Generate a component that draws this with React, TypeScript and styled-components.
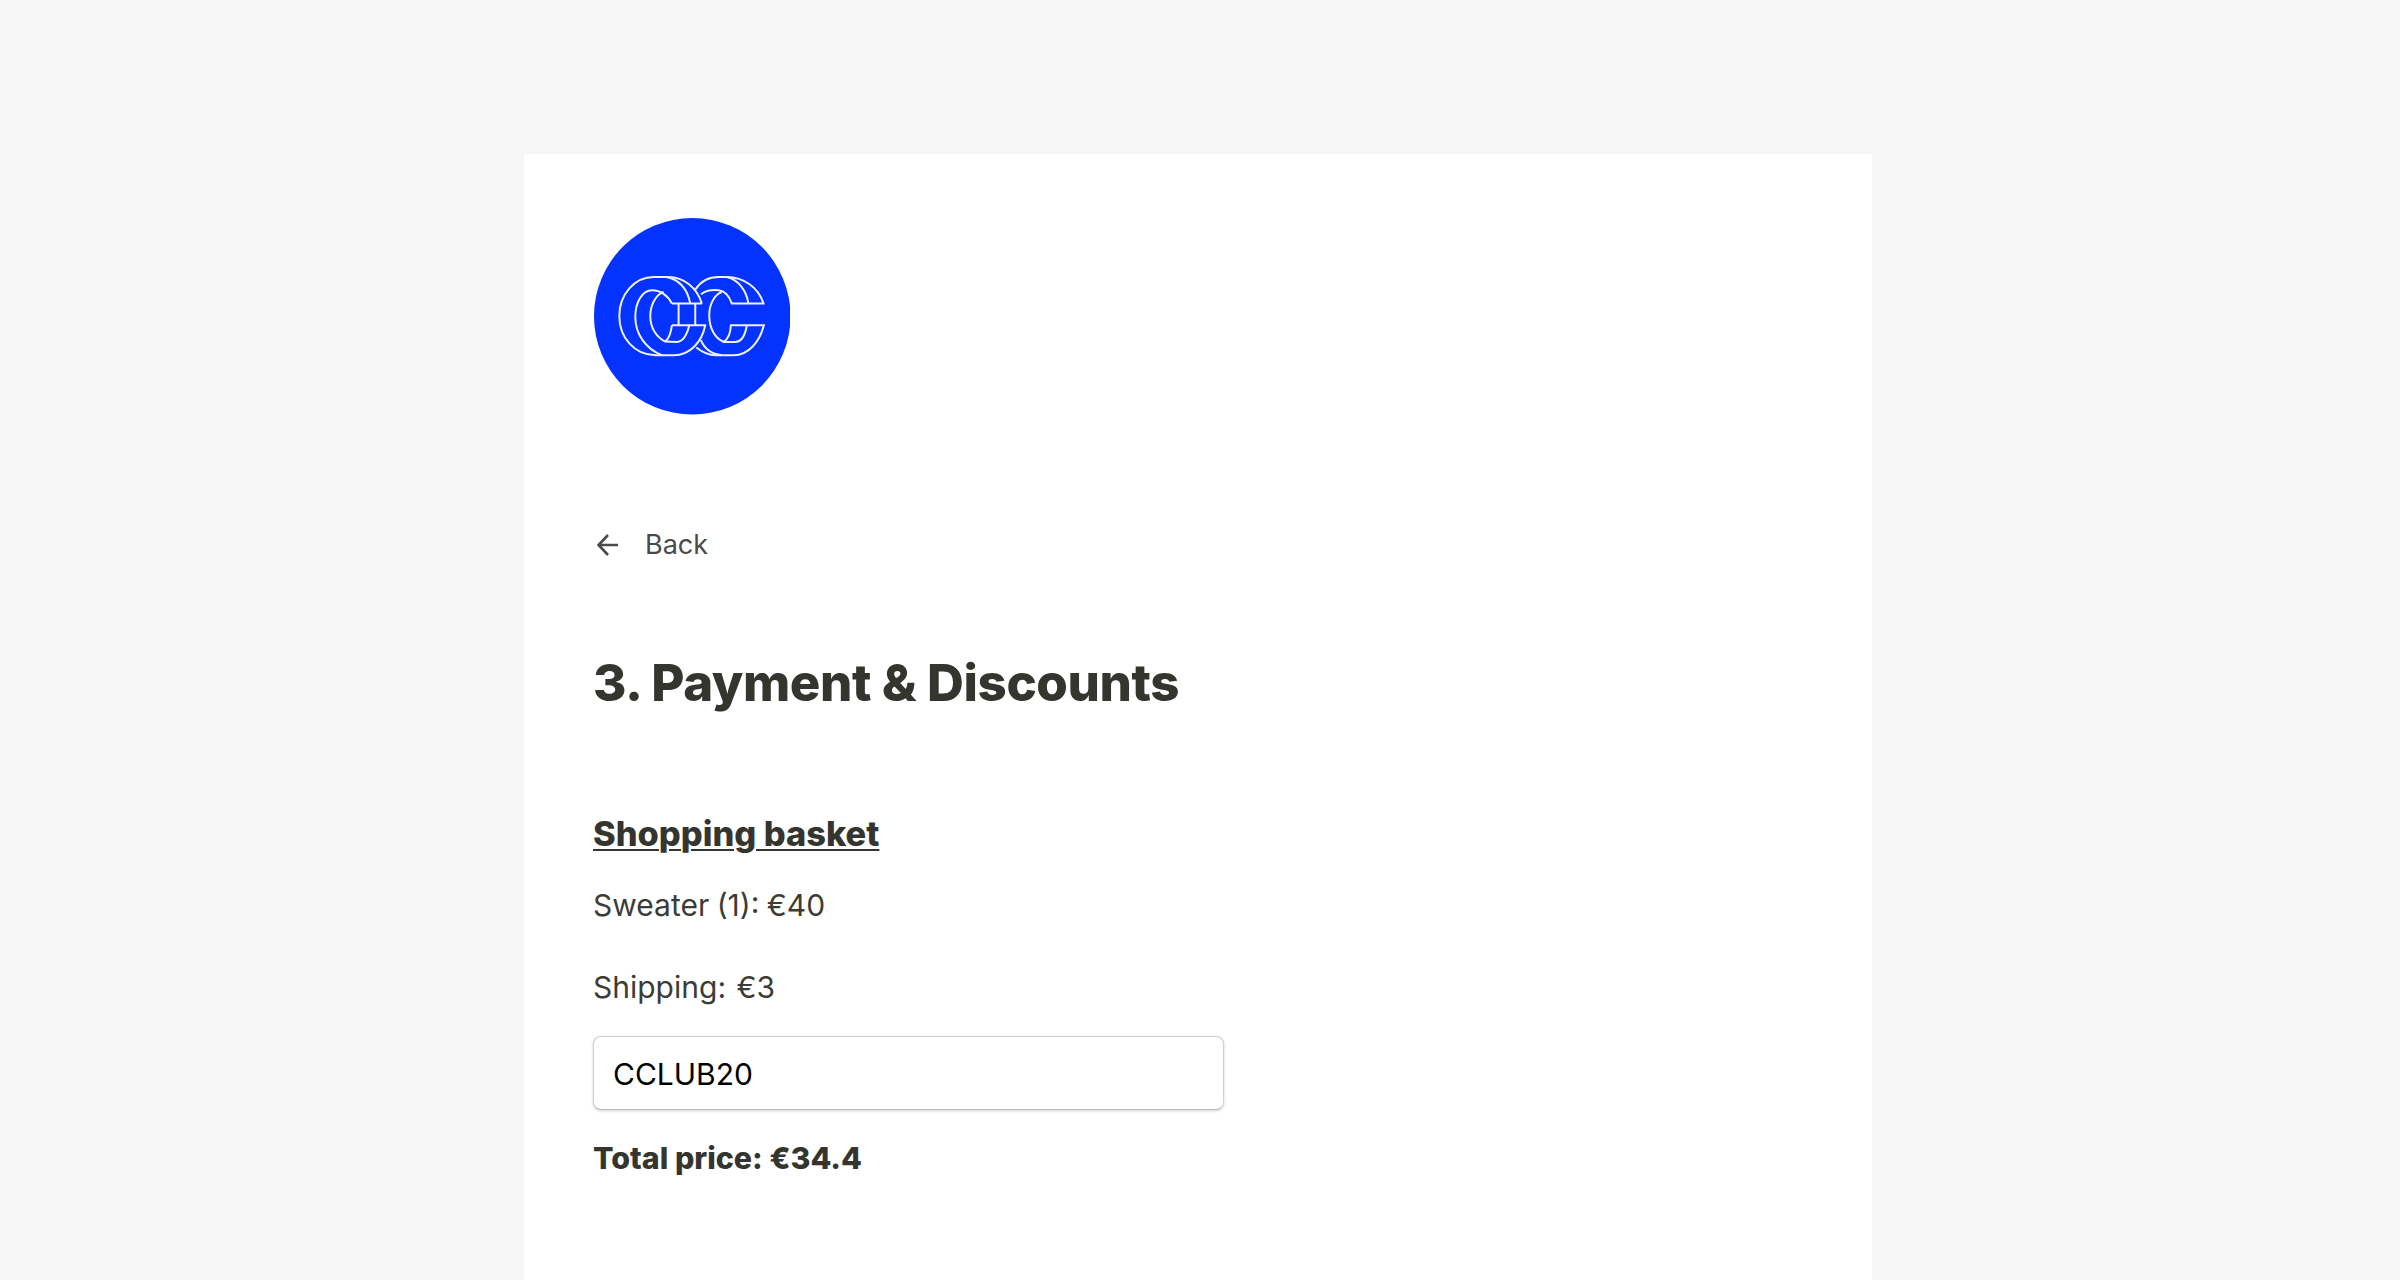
import React from "react";
import styled, { createGlobalStyle } from "styled-components";

const GlobalStyle = createGlobalStyle`
  html, body {
    margin: 0;
    padding: 0;
    background: #f6f6f6;
    font-family: Inter, "Liberation Sans", sans-serif;
    color: #35352f;
  }
`;

const Page = styled.div`
  width: 100%;
  height: 1280px;
  overflow: hidden;
  padding: 154px 0 0 524px;
  box-sizing: border-box;
`;

const Card = styled.main`
  width: 1348px;
  height: 1126px;
  background: #ffffff;
  padding: 64px 70px 0 69px;
  box-sizing: border-box;
`;

const LogoBadge = styled.svg`
  display: block;
  width: 196.5px;
  height: 196.5px;
  margin-left: 0.5px;
`;

const BackLink = styled.a`
  display: flex;
  align-items: center;
  gap: 27px;
  margin-top: 111px;
  height: 38px;
  padding-left: 4px;
  font-size: 27px;
  color: #4a4a4a;
  text-decoration: none;
`;

const Heading = styled.h1`
  margin: 88px 0 0;
  font-size: 51px;
  line-height: 62px;
  font-weight: 800;
  letter-spacing: -0.4px;
  color: #35352f;
`;

const BasketTitle = styled.h2`
  margin: 98px 0 0;
  font-size: 34.4px;
  line-height: 44px;
  font-weight: 800;
  text-decoration: underline;
  text-decoration-thickness: 2px;
  text-underline-offset: 3px;
`;

const Line = styled.p`
  margin: 0;
  font-size: 30px;
  line-height: 42px;
  color: #3c3c36;
`;

const BasketLine = styled(Line)`
  margin-top: 28px;
  word-spacing: -1px;

  & + & {
    margin-top: 40px;
    word-spacing: 2px;
  }
`;

const CodeInput = styled.input`
  display: block;
  width: 631px;
  height: 74px;
  margin-top: 28px;
  padding: 2px 19px 0;
  box-sizing: border-box;
  background: #fff;
  border: 1px solid #cfcfd6;
  border-bottom-color: #b9b9c0;
  border-radius: 8px;
  box-shadow: 0 1px 3px rgba(0, 0, 0, 0.18);
  font-family: inherit;
  font-size: 30px;
  color: #000;
  outline: none;
`;

const Total = styled(Line)`
  margin-top: 27px;
  font-size: 30.4px;
  font-weight: 800;
  color: #35352f;
`;

const LOGO_PATHS = [
  // left C, outer edge and terminals
  "M365 310 C350 262 310 230 265 230 L220 230 C163 230 117 282 117 347 C117 412 163 465 225 465 L280 465 C330 465 365 425 375 375 L275 375",
  // left C, inner edges
  "M275 310 C263 285 240 270 215 270 C187 270 165 305 165 350 C165 400 195 445 245 465",
  "M250 275 C225 285 210 315 210 348 C210 385 230 412 255 424 L288 425 C306 425 320 405 327 375",
  "M258 230 C298 238 322 268 330 310",
  "M255 424 C266 416 272 398 275 375",
  "M275 310 L365 310 M295 310 L295 375 M345 310 L345 375",
  // right C
  "M345 268 C360 245 385 230 415 230 L440 230 C490 230 535 262 550 310 L455 310 C448 290 435 272 415 270 C395 268 375 272 362 282",
  "M425 275 C400 285 387 315 387 345 C387 385 405 415 430 425 L465 425 C483 425 495 405 500 375",
  "M440 230 C475 238 498 270 505 310",
  "M430 425 C443 417 451 398 452 375 L551 375 C538 425 505 465 460 465 L405 465 C385 465 365 455 348 442",
  "M362 420 C372 445 395 462 425 465",
];

const Logo = () => (
  <LogoBadge viewBox="41 53 590 590">
    <circle cx="336" cy="348" r="295" fill="#0433ff" />
    {LOGO_PATHS.map((d) => (
      <path key={d} d={d} fill="none" stroke="#eef1ff" strokeWidth="6" />
    ))}
  </LogoBadge>
);

const BackArrow = () => (
  <svg width="21" height="24" viewBox="0 0 21 24" fill="none" stroke="#4a4a4a" strokeWidth="2.6">
    <path d="M21 12 H2 M11 2 L1.5 12 L11 22" />
  </svg>
);

export default function App() {
  return (
    <>
      <GlobalStyle />
      <Page>
        <Card>
          <Logo />
          <BackLink href="#">
            <BackArrow />
            Back
          </BackLink>
          <Heading>3. Payment &amp; Discounts</Heading>
          <BasketTitle>Shopping basket</BasketTitle>
          <BasketLine>Sweater (1): €40</BasketLine>
          <BasketLine>Shipping: €3</BasketLine>
          <CodeInput defaultValue="CCLUB20" />
          <Total>Total price: €34.4</Total>
        </Card>
      </Page>
    </>
  );
}
